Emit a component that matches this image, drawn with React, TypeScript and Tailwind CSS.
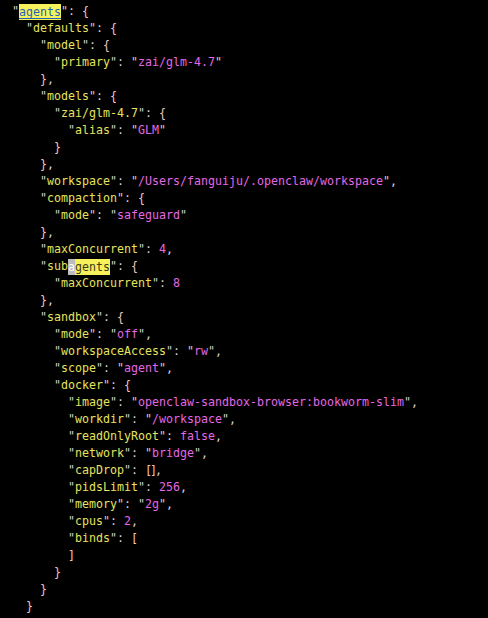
import { ReactNode } from "react";

// JSON lines as shown in the terminal, indent counted from the "agents" level
const lines: string[] = [
    `"agents": {`,
    `  "defaults": {`,
    `    "model": {`,
    `      "primary": "zai/glm-4.7"`,
    `    },`,
    `    "models": {`,
    `      "zai/glm-4.7": {`,
    `        "alias": "GLM"`,
    `      }`,
    `    },`,
    `    "workspace": "/Users/fanguiju/.openclaw/workspace",`,
    `    "compaction": {`,
    `      "mode": "safeguard"`,
    `    },`,
    `    "maxConcurrent": 4,`,
    `    "subagents": {`,
    `      "maxConcurrent": 8`,
    `    },`,
    `    "sandbox": {`,
    `      "mode": "off",`,
    `      "workspaceAccess": "rw",`,
    `      "scope": "agent",`,
    `      "docker": {`,
    `        "image": "openclaw-sandbox-browser:bookworm-slim",`,
    `        "workdir": "/workspace",`,
    `        "readOnlyRoot": false,`,
    `        "network": "bridge",`,
    `        "capDrop": [],`,
    `        "pidsLimit": 256,`,
    `        "memory": "2g",`,
    `        "cpus": 2,`,
    `        "binds": [`,
    `        ]`,
    `      }`,
    `    }`,
    `  }`,
];

const QUOTE = "text-[#d6d6d6]";
const KEY = "text-[#e6e35f]";
const VALUE = "text-[#e467e4]";
const BRACE = "text-[#f3c6c2]";
const MARK = "inline-block leading-[16px] align-top mt-[1px]";

function renderKey(name: string): ReactNode {
    if (name === "agents") {
        return <span className={`${MARK} bg-[#f7f25c] text-[#1d63b8] underline underline-offset-2`}>agents</span>;
    }
    if (name === "subagents") {
        return (
            <>
                <span className={KEY}>sub</span>
                <span className={`${MARK} bg-[#bdbdbd] text-white`}>a</span>
                <span className={`${MARK} bg-[#f7f25c] text-[#3a3a1a]`}>gents</span>
            </>
        );
    }
    return <span className={KEY}>{name}</span>;
}

function renderLine(text: string): ReactNode[] {
    const out: ReactNode[] = [];
    const re = /"([^"]*)"(\s*:)?|(\d+|false|true)|(\[\]|[{}[\]])|([^"\d{}[\]a-z]+)/g;
    let m: RegExpExecArray | null;
    let i = 0;
    while ((m = re.exec(text)) !== null) {
        if (m[1] !== undefined) {
            const isKey = !!m[2];
            out.push(<span key={i++} className={QUOTE}>"</span>);
            out.push(isKey ? <span key={i++}>{renderKey(m[1])}</span> : <span key={i++} className={VALUE}>{m[1]}</span>);
            out.push(<span key={i++} className={QUOTE}>"{m[2] ?? ""}</span>);
        } else if (m[3]) {
            out.push(<span key={i++} className={VALUE}>{m[3]}</span>);
        } else if (m[4]) {
            out.push(
                <span key={i++} className={m[4] === "[]" ? `${BRACE} tracking-[-2px]` : BRACE}>
                    {m[4]}
                </span>
            );
        } else {
            out.push(<span key={i++} className={QUOTE}>{m[5]}</span>);
        }
    }
    return out;
}

export default function App() {
    return (
        <div className="w-full h-screen bg-black overflow-hidden pt-[3px] pl-[12px]">
            <pre className="m-0 font-['DejaVu_Sans_Mono',monospace] text-[11.63px] leading-[17px]">
                {lines.map((l, idx) => (
                    <div key={idx} className="h-[17px] whitespace-pre">
                        {renderLine(l)}
                    </div>
                ))}
            </pre>
        </div>
    );
}
